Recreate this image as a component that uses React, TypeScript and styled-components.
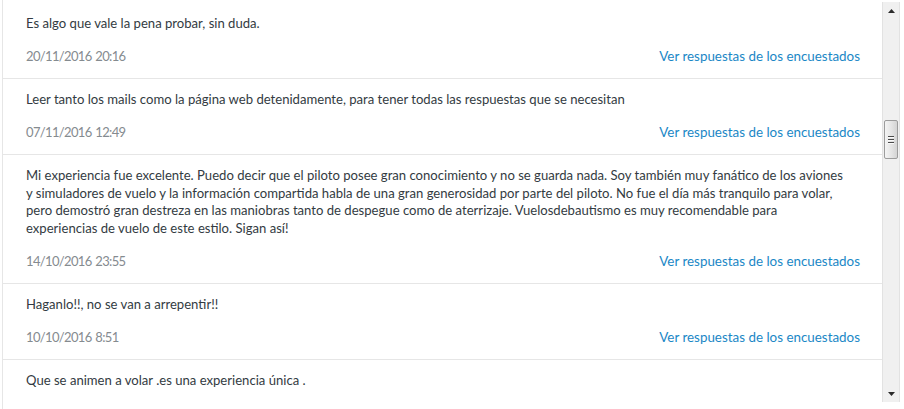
import React from 'react'
import styled, { createGlobalStyle } from 'styled-components'

const GlobalStyle = createGlobalStyle`
    html, body {
        margin: 0;
        padding: 0;
        background: #ffffff;
    }
    body {
        font-family: Lato, "Liberation Sans", Arial, sans-serif;
        overflow: hidden;
    }
`;

type Response = {
    id: number
    text: string
    date?: string
}

// long answers keep the line breaks of the original layout
const responses: Response[] = [
    { id: 1, text: 'Es algo que vale la pena probar, sin duda.', date: '20/11/2016 20:16' },
    { id: 2, text: 'Leer tanto los mails como la página web detenidamente, para tener todas las respuestas que se necesitan', date: '07/11/2016 12:49' },
    {
        id: 3,
        text: 'Mi experiencia fue excelente. Puedo decir que el piloto posee gran conocimiento y no se guarda nada. Soy también muy fanático de los aviones\ny simuladores de vuelo y la información compartida habla de una gran generosidad por parte del piloto. No fue el día más tranquilo para volar,\npero demostró gran destreza en las maniobras tanto de despegue como de aterrizaje. Vuelosdebautismo es muy recomendable para\nexperiencias de vuelo de este estilo. Sigan así!',
        date: '14/10/2016 23:55',
    },
    { id: 4, text: 'Haganlo!!, no se van a arrepentir!!', date: '10/10/2016 8:51' },
    { id: 5, text: 'Que se animen a volar .es una experiencia única .' },
]

const Page = styled.div`
    display: flex;
    height: 409px;
    width: 904px;
    padding-left: 2px;
    box-sizing: border-box;
    overflow: hidden;
`;

const Panel = styled.div`
    flex: 1;
    border-left: 1px solid #e6e6e6;
`;

// visible part of the scrolled list, ends level with the scrollbar
const Viewport = styled.div`
    height: 402px;
    overflow: hidden;
`;

const List = styled.ul`
    list-style: none;
    margin: 0;
    padding: 3px 0 0;
`;

const Row = styled.li`
    padding: 12px 22px 13px 23px;
    border-bottom: 1px solid #e6e6e6;
`;

const Answer = styled.div`
    font-size: 13.1px;
    line-height: 17.5px;
    color: #333b42;
    white-space: pre-line;
`;

const Meta = styled.div`
    display: flex;
    justify-content: space-between;
    margin-top: 14.5px;
    font-size: 13.4px;
    line-height: 18px;
`;

const Stamp = styled.span`
    color: #858b90;
    font-size: 13px;
    letter-spacing: -0.65px;
    word-spacing: 1px;
`;

const ViewLink = styled.a`
    color: #1a87c6;
    text-decoration: none;
    cursor: pointer;
`;

const Track = styled.div`
    width: 16px;
    height: 400px;
    margin: 2px 4px 0 0;
    display: flex;
    flex-direction: column;
    background: #f0f0f0;
    border-left: 1px solid #e2e2e2;
    border-right: 1px solid #e2e2e2;
`;

const Arrow = styled.div`
    height: 17px;
    display: flex;
    align-items: center;
    justify-content: center;
`;

const Spacer = styled.div`
    flex: 1;
`;

const Thumb = styled.div`
    height: 37px;
    margin: 0 1px;
    border: 1px solid #9c9c9c;
    border-radius: 2px;
    background: linear-gradient(to right, #f4f4f4 0%, #e4e4e4 55%, #d4d4d4 100%);
    display: flex;
    flex-direction: column;
    align-items: center;
    justify-content: center;
    gap: 2px;
`;

const Grip = styled.span`
    width: 6px;
    height: 1px;
    background: #4a4a4a;
    box-shadow: 0 1px 0 #fafafa;
`;

const Triangle = ({ down }: { down?: boolean }) => (
    <svg width="7" height="4" viewBox="0 0 7 4">
        <polygon points={down ? '0,0 7,0 3.5,4' : '3.5,0 7,4 0,4'} fill="#2b2b2b" />
    </svg>
);

const Scrollbar = ({ offset }: { offset: number }) => (
    <Track>
        <Arrow><Triangle /></Arrow>
        <Thumb style={{ marginTop: offset }}>
            <Grip />
            <Grip />
            <Grip />
        </Thumb>
        <Spacer />
        <Arrow><Triangle down /></Arrow>
    </Track>
);

export default function App() {
    return (
        <>
            <GlobalStyle />
            <Page>
                <Panel>
                    <Viewport>
                        <List>
                            {responses.map((r) => (
                                <Row key={r.id}>
                                    <Answer>{r.text}</Answer>
                                    {r.date && (
                                        <Meta>
                                            <Stamp>{r.date}</Stamp>
                                            <ViewLink>Ver respuestas de los encuestados</ViewLink>
                                        </Meta>
                                    )}
                                </Row>
                            ))}
                        </List>
                    </Viewport>
                </Panel>
                <Scrollbar offset={101} />
            </Page>
        </>
    );
}
